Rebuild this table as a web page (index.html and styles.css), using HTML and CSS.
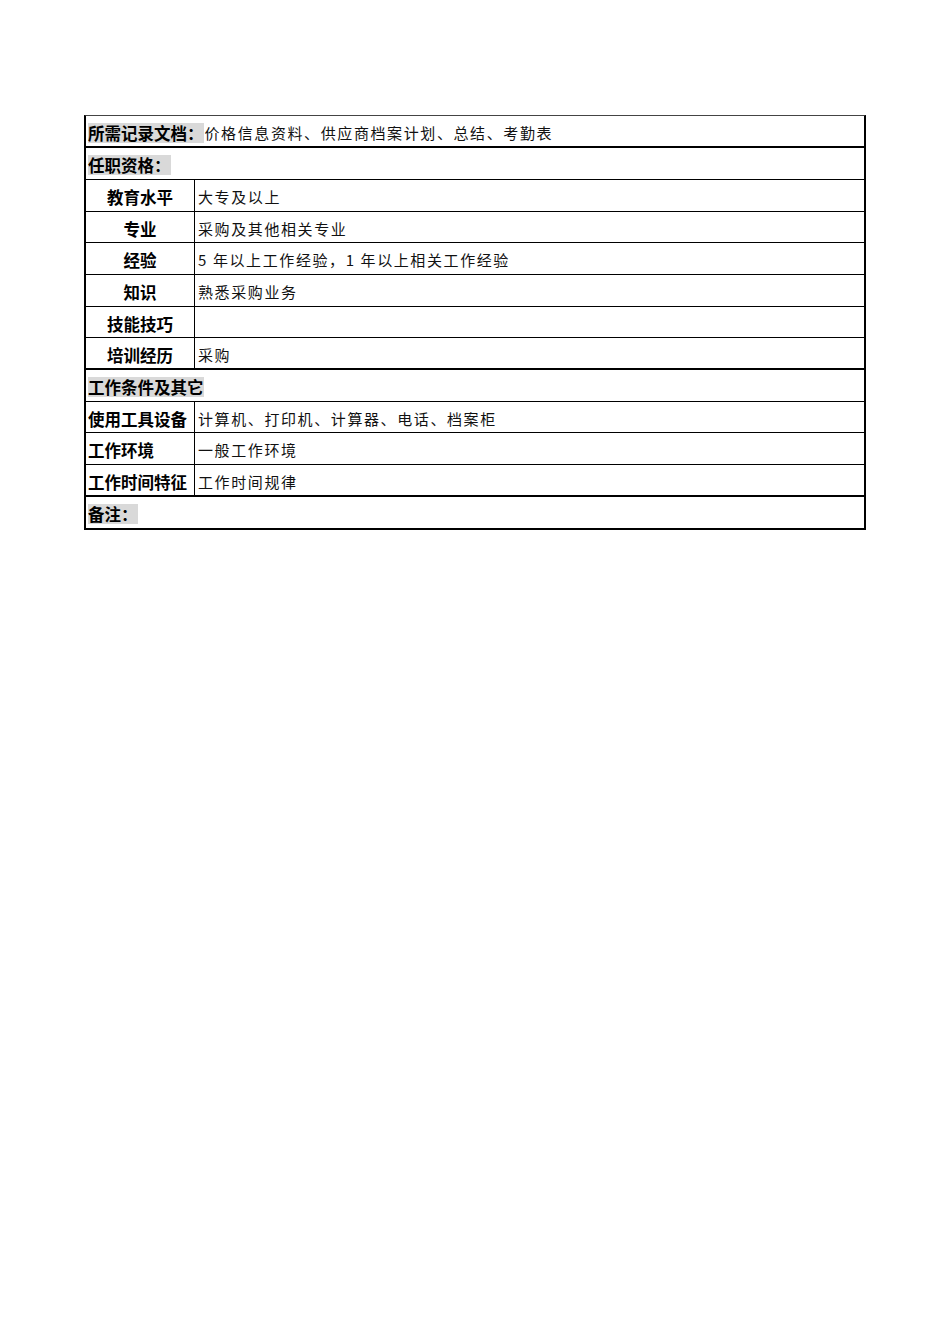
FILE: index.html
```html
<!DOCTYPE html>
<html lang="zh">
<head>
<meta charset="utf-8">
<title>岗位说明书</title>
<link rel="stylesheet" href="styles.css">
</head>
<body>
<div class="sheet">
  <div class="row h32 thick">
    <div class="full"><span class="hl lbl">所需记录文档：</span><span class="val wide">价格信息资料、供应商档案计划、总结、考勤表</span></div>
  </div>
  <div class="row h32">
    <div class="full"><span class="hl lbl">任职资格：</span></div>
  </div>
  <div class="row h32">
    <div class="key center lbl">教育水平</div><div class="cell val">大专及以上</div>
  </div>
  <div class="row h31">
    <div class="key center lbl">专业</div><div class="cell val">采购及其他相关专业</div>
  </div>
  <div class="row h32">
    <div class="key center lbl">经验</div><div class="cell val">5 年以上工作经验，1 年以上相关工作经验</div>
  </div>
  <div class="row h32">
    <div class="key center lbl">知识</div><div class="cell val">熟悉采购业务</div>
  </div>
  <div class="row h31">
    <div class="key center lbl">技能技巧</div><div class="cell val"></div>
  </div>
  <div class="row h32 thick">
    <div class="key center lbl">培训经历</div><div class="cell val">采购</div>
  </div>
  <div class="row h32">
    <div class="full"><span class="hl lbl">工作条件及其它</span></div>
  </div>
  <div class="row h31">
    <div class="key lbl">使用工具设备</div><div class="cell val">计算机、打印机、计算器、电话、档案柜</div>
  </div>
  <div class="row h32">
    <div class="key lbl">工作环境</div><div class="cell val">一般工作环境</div>
  </div>
  <div class="row h32 thick">
    <div class="key lbl">工作时间特征</div><div class="cell val">工作时间规律</div>
  </div>
  <div class="row h31 last">
    <div class="full"><span class="hl lbl">备注：</span></div>
  </div>
</div>
</body>
</html>
```

FILE: styles.css
```css
html, body {
  margin: 0;
  padding: 0;
  background: #fff;
}

body {
  padding: 115px 0 0 84px;
  font-family: "Noto Sans CJK SC", "Liberation Sans", sans-serif;
  color: #000;
}

.sheet {
  width: 782px;
  box-sizing: border-box;
  border-top: 1px solid #444;
  border-left: 2px solid #000;
  border-right: 2px solid #000;
  border-bottom: 2px solid #000;
}

.row {
  display: flex;
  box-sizing: border-box;
  border-bottom: 1px solid #000;
}

.row.h32 { height: 32px; }
.row.h31 { height: 31px; }
.row.thick { border-bottom-width: 2px; }
.row.last { border-bottom: none; }

.full {
  flex: 1;
  display: flex;
  align-items: center;
  padding: 3px 0 0 2px;
}

.key {
  width: 109px;
  flex: none;
  box-sizing: border-box;
  border-right: 1px solid #000;
  display: flex;
  align-items: center;
  padding: 3px 0 0 2px;
  white-space: nowrap;
}

.key.center {
  justify-content: center;
  padding-left: 0;
}

.cell {
  flex: 1;
  display: flex;
  align-items: center;
  padding: 3px 0 0 3px;
}

.lbl {
  font-size: 16.5px;
  font-weight: 700;
  line-height: 20px;
}

.hl {
  background: #d9d9d9;
}

.val {
  font-size: 15px;
  font-weight: 400;
  line-height: 20px;
  letter-spacing: 1.6px;
  white-space: nowrap;
  color: #111;
}

.val.wide {
  padding-left: 1px;
}
```
